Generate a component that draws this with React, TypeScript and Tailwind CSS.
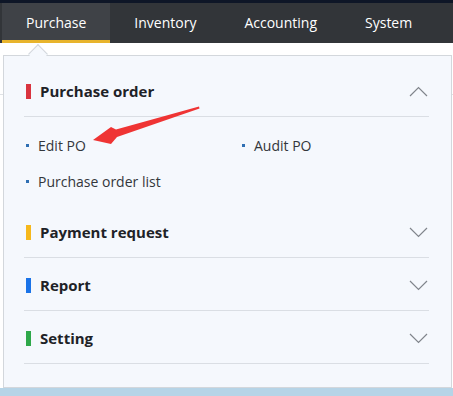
const tabs = ['Purchase', 'Inventory', 'Accounting', 'System'];

const sections = [
  { title: 'Purchase order', color: 'bg-[#d9343f]', open: true },
  { title: 'Payment request', color: 'bg-[#f6b81c]', open: false },
  { title: 'Report', color: 'bg-[#1a73e8]', open: false },
  { title: 'Setting', color: 'bg-[#2ea84a]', open: false },
];

function Chevron({ up }: { up: boolean }) {
  return (
    <svg width="19" height="11" viewBox="0 0 19 11" fill="none" stroke="#80858c" strokeWidth="1.2">
      {up ? <polyline points="1,10 9.5,1.5 18,10" /> : <polyline points="1,1 9.5,9.5 18,1" />}
    </svg>
  );
}

function Item({ label }: { label: string }) {
  return (
    <div className="flex items-center h-[36px]">
      <span className="w-[3px] h-[3px] bg-[#2f6fb3] mr-[9px]" />
      <span className="text-[14px] text-[#33363b]">{label}</span>
    </div>
  );
}

export default function App() {
  return (
    <div className="relative w-[453px] h-[396px] overflow-hidden bg-white font-['Open_Sans',sans-serif]">
      {/* top strip + nav */}
      <div className="h-[3px] bg-[#0e1627]" />
      <nav className="h-[40px] bg-[#323539] flex pl-[2px]">
        {tabs.map((t, i) => (
          <div
            key={t}
            className={
              i === 0
                ? 'h-full px-6 flex items-center text-[14px] text-white bg-[#3f4247] border-b-[3px] border-[#e8b42c] pt-[1px]'
                : 'h-full px-6 flex items-center text-[14px] text-white pb-[1px]'
            }
          >
            {t}
          </div>
        ))}
      </nav>

      {/* page behind the dropdown */}
      <div className="flex flex-col h-[353px]">
        <div className="h-[52px] border-b border-[#dfe2e6]" />
        <div className="flex-1" />
        <div className="h-[8px] bg-[#b6d4e7]" />
      </div>

      {/* dropdown panel */}
      <div className="absolute left-[3px] top-[55px] w-[449px] h-[333px] border border-[#d3d7dc] bg-[#f5f8fd] pl-[20px] pr-[22px] pt-[8px]">
        <div className="absolute left-[27px] top-[-9px] w-[14px] h-[14px] rotate-45 bg-[#f5f8fd] border-l border-t border-[#d3d7dc]" />
        {sections.map((s) => (
          <div key={s.title}>
            <div className="h-[53px] flex items-center border-b border-[#dadee4] pl-[2px] pt-[3px]">
              <span className={`w-[5px] h-[15px] ${s.color}`} />
              <span className="ml-[9px] text-[15px] font-bold text-[#1e2227]">{s.title}</span>
              <span className="ml-auto mr-[1px]">
                <Chevron up={s.open} />
              </span>
            </div>
            {s.open && (
              <div className="grid grid-cols-[216px_1fr] pl-[2px] pt-[10px] pb-[6px]">
                <Item label="Edit PO" />
                <Item label="Audit PO" />
                <Item label="Purchase order list" />
              </div>
            )}
          </div>
        ))}
      </div>

      {/* annotation arrow */}
      <svg className="absolute inset-0 pointer-events-none" width="453" height="396">
        <polygon
          points="199,106.5 116,129.5 111,127 93,140 111,144 117,137 199.5,108.5"
          fill="#ef3434"
        />
      </svg>
    </div>
  );
}
